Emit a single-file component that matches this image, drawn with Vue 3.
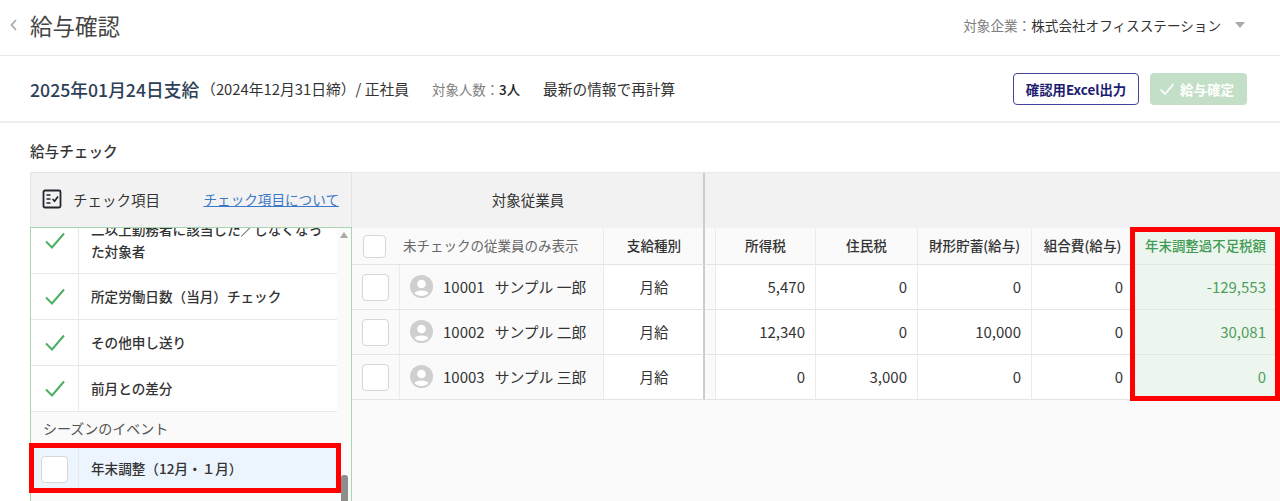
<script setup>
const checks = [
  { label: '二以上勤務者に該当した／しなくなった対象者', cls: 'first' },
  { label: '所定労働日数（当月）チェック' },
  { label: 'その他申し送り' },
  { label: '前月との差分' },
]
const columns = ['所得税', '住民税', '財形貯蓄(給与)', '組合費(給与)']
const employees = [
  { id: '10001', name: 'サンプル 一郎', type: '月給', vals: ['5,470', '0', '0', '0'], diff: '-129,553' },
  { id: '10002', name: 'サンプル 二郎', type: '月給', vals: ['12,340', '0', '10,000', '0'], diff: '30,081' },
  { id: '10003', name: 'サンプル 三郎', type: '月給', vals: ['0', '3,000', '0', '0'], diff: '0' },
]
</script>

<template>
  <div class="page">
    <header class="top">
      <div class="top-left">
        <svg class="back" width="9" height="14" viewBox="0 0 9 14"><path d="M7 2 L2.5 7 L7 12" fill="none" stroke="#aaa" stroke-width="1.8" /></svg>
        <h1>給与確認</h1>
      </div>
      <div class="company">
        <span class="muted">対象企業：</span><span>株式会社オフィスステーション</span>
        <span class="tri"></span>
      </div>
    </header>

    <section class="sub">
      <div class="sub-left">
        <strong class="pay">2025年01月24日支給</strong>
        <span class="close">（2024年12月31日締）/ 正社員</span>
        <span class="count"><span class="muted">対象人数：</span><b>3人</b></span>
        <span class="recalc">最新の情報で再計算</span>
      </div>
      <div class="actions">
        <button class="btn-outline">確認用Excel出力</button>
        <button class="btn-done">
          <svg width="16" height="14" viewBox="0 0 16 14"><path d="M1.5 7.5 L6 12 L14.5 2" fill="none" stroke="#fff" stroke-width="1.6" /></svg>
          給与確定
        </button>
      </div>
    </section>

    <main class="content">
      <h2>給与チェック</h2>
      <div class="board">
        <aside class="panel">
          <div class="panel-head">
            <svg width="20" height="20" viewBox="0 0 20 20">
              <rect x="1.5" y="1.5" width="17" height="17" rx="1.5" fill="none" stroke="#23262e" stroke-width="1.8" />
              <path d="M4.5 6h4M4.5 10h4M4.5 14h4" stroke="#23262e" stroke-width="1.5" />
              <path d="M10.5 10 L12.6 12.2 L16 7.5" fill="none" stroke="#23262e" stroke-width="1.7" />
            </svg>
            <span class="panel-title">チェック項目</span>
            <a class="panel-link">チェック項目について</a>
          </div>
          <div class="list">
            <div class="list-items">
              <div v-for="c in checks" :key="c.label" class="item" :class="c.cls">
                <div class="item-mark">
                  <svg width="22" height="18" viewBox="0 0 22 18"><path d="M2 9.5 L8 15.5 L20 1.5" fill="none" stroke="#4caf64" stroke-width="2" /></svg>
                </div>
                <div class="item-label">{{ c.label }}</div>
              </div>
              <div class="season">シーズンのイベント</div>
              <div class="item active">
                <div class="item-mark"><span class="box"></span></div>
                <div class="item-label">年末調整（12月・１月）</div>
              </div>
            </div>
            <div class="scrollbar">
              <span class="arrow"></span>
              <span class="thumb"></span>
            </div>
          </div>
          <div class="mark-red list-red"></div>
        </aside>

        <div class="right">
          <div class="right-head">
            <div class="emp-head">対象従業員</div>
          </div>
          <div class="table">
            <div class="cell sticky chk hd noline"><span class="box small"></span></div>
            <div class="cell sticky emp hd only">未チェックの従業員のみ表示</div>
            <div class="cell sticky type hd strong">支給種別</div>
            <div class="cell spacer hd"></div>
            <div v-for="c in columns" :key="c" class="cell hd strong center">{{ c }}</div>
            <div class="cell hd strong center green">年末調整過不足税額</div>

            <template v-for="e in employees" :key="e.id">
              <div class="cell sticky chk"><span class="box"></span></div>
              <div class="cell sticky emp">
                <svg class="avatar" width="23" height="23" viewBox="0 0 23 23">
                  <circle cx="11.5" cy="11.5" r="11.5" fill="#cfcfcf" />
                  <circle cx="11.5" cy="9" r="4.3" fill="#fff" />
                  <path d="M4.5 18 C6 14.5 17 14.5 18.5 18 C16.5 20.2 14 21 11.5 21 C9 21 6.5 20.2 4.5 18Z" fill="#fff" />
                </svg>
                <span class="emp-id">{{ e.id }}</span>
                <span class="emp-name">{{ e.name }}</span>
              </div>
              <div class="cell type body center">{{ e.type }}</div>
              <div class="cell spacer body"></div>
              <div v-for="(v, i) in e.vals" :key="i" class="cell num body">{{ v }}</div>
              <div class="cell num green-body">{{ e.diff }}</div>
            </template>
            <div class="mark-red table-red"></div>
          </div>
        </div>
      </div>
    </main>
  </div>
</template>

<style>
html, body { margin: 0; background: #fff; }
</style>

<style scoped>
.page {
  width: 1280px;
  height: 501px;
  overflow: hidden;
  background: #fff;
  color: #333;
  font-family: "Noto Sans CJK JP", "Noto Sans", sans-serif;
  font-size: 14px;
}
.top {
  box-sizing: border-box;
  height: 56px;
  border-bottom: 1px solid #e8e8e8;
  display: flex;
  align-items: center;
  justify-content: space-between;
  padding: 0 35px 6px 9px;
}
.top-left { display: flex; align-items: center; gap: 12px; }
h1 { margin: 0; font-size: 22.5px; font-weight: 400; color: #444; line-height: 30px; }
.company { display: flex; align-items: center; font-size: 13.6px; color: #333; }
.muted { color: #808080; }
.tri {
  margin-left: 14px;
  width: 0; height: 0;
  border-left: 5.5px solid transparent;
  border-right: 5.5px solid transparent;
  border-top: 6px solid #aaa;
}
.sub {
  box-sizing: border-box;
  height: 67px;
  border-bottom: 2px solid #eee;
  display: flex;
  align-items: center;
  justify-content: space-between;
  padding: 0 33px 0 30px;
}
.sub-left { display: flex; align-items: center; }
.pay { font-size: 17.7px; font-weight: 500; color: #2d3f56; }
.close { font-size: 14.8px; color: #333; margin-left: 2px; }
.count { font-size: 13.4px; margin-left: 23px; }
.count b { font-weight: 500; color: #222; }
.recalc { font-size: 14.7px; margin-left: 23px; color: #333; }
.actions { display: flex; gap: 11px; }
button { font-family: inherit; cursor: pointer; padding: 0; }
.btn-outline {
  box-sizing: border-box;
  width: 126px; height: 32px;
  border: 1.5px solid #44449a;
  border-radius: 4px;
  background: #fff;
  color: #1c1c70;
  font-size: 13.4px;
  font-weight: 700;
}
.btn-done {
  box-sizing: border-box;
  width: 97px; height: 32px;
  border: 0;
  border-radius: 4px;
  background: #c3dfc8;
  color: #fff;
  font-size: 13.5px;
  font-weight: 700;
  display: flex;
  align-items: center;
  justify-content: center;
  gap: 5px;
  padding-right: 4px;
}
.content { background: #fff; padding-left: 30px; height: 378px; }
h2 { margin: 0; padding-top: 17px; height: 32px; font-size: 14.6px; line-height: 22px; font-weight: 500; color: #333; }
.board { display: flex; height: 329px; }
.panel { position: relative; width: 322px; flex: none; }
.panel-head {
  box-sizing: border-box;
  height: 55px;
  background: #f2f2f2;
  border: 1px solid #e4e4e4;
  border-bottom: 0;
  display: flex;
  align-items: center;
  padding: 0 12px 2px 11px;
}
.panel-title { margin-left: 11px; font-size: 14.5px; color: #333; }
.panel-link { margin-left: auto; font-size: 13.6px; color: #3d78c8; text-decoration: underline; }
.list {
  display: flex;
  height: 274px;
  overflow: hidden;
  border: 2px solid #a6d5ae;
  border-width: 1px 1px 0;
  box-sizing: border-box;
}
.list-items { flex: 1; min-width: 0; background: #fafafa; margin-top: -20px; }
.item {
  display: flex;
  height: 46px;
  box-sizing: border-box;
  border-bottom: 1px solid #e8e8e8;
  background: #fff;
}
.item.first { height: 66px; }
.item-mark {
  flex: none;
  width: 48px;
  box-sizing: border-box;
  border-right: 1px solid #e8e8e8;
  display: flex;
  align-items: center;
  justify-content: center;
}
.item-label {
  box-sizing: border-box;
  flex: 1;
  display: flex;
  align-items: center;
  padding: 0 12px 2px;
  font-size: 13.6px;
  font-weight: 500;
  line-height: 22px;
  color: #333;
}
.season { height: 34px; line-height: 33px; padding-left: 12px; font-size: 14px; color: #555; background: #fafafa; }
.item.active { background: #ecf4fd; border-bottom: 0; }
.scrollbar { position: relative; flex: none; width: 14px; background: #fafafa; }
.arrow {
  position: absolute; left: 2.5px; top: 4px;
  width: 0; height: 0;
  border-left: 4.5px solid transparent;
  border-right: 4.5px solid transparent;
  border-bottom: 6px solid #aaa;
}
.thumb {
  position: absolute; left: 4px; top: 247px;
  width: 7px; height: 40px;
  border-radius: 3px;
  background: #8e8e8e;
}
.box {
  display: block;
  box-sizing: border-box;
  width: 27px; height: 27px;
  background: #fff;
  border: 1.5px solid #d6d6d6;
  border-radius: 4px;
}
.box.small { width: 23px; height: 23px; margin-left: -4px; }
.mark-red { position: absolute; border: 5px solid #f00; box-sizing: border-box; pointer-events: none; }
.list-red { left: -1px; top: 271px; width: 312px; height: 50px; }

.right { flex: 1; min-width: 0; background: #fafafa; }
.right-head { height: 56px; background: #f2f2f2; border-top: 1px solid #e8e8e8; box-sizing: border-box; display: flex; }
.emp-head {
  box-sizing: border-box;
  width: 353px;
  border-right: 2px solid #ccc;
  display: flex;
  align-items: center;
  justify-content: center;
  padding: 0 0 2px 1px;
  font-size: 14.5px;
  color: #333;
}
.table {
  position: relative;
  display: grid;
  grid-template-columns: 48px 204px 101px 11px 100px 102px 114px 102px 146px;
  grid-template-rows: 37px 45px 45px 45px;
}
.cell {
  box-sizing: border-box;
  border-right: 1px solid #ebebeb;
  border-bottom: 1px solid #e4e4e4;
  display: flex;
  align-items: center;
  padding-bottom: 2px;
  font-size: 14.5px;
  color: #333;
}
.hd { background: #fafafa; font-size: 13.6px; }
.noline { border-right: 0; }
.strong { font-weight: 500; }
.center { justify-content: center; }
.sticky { background: #fafafa; }
.chk { justify-content: center; padding-bottom: 0; }
.emp { padding-left: 10px; gap: 10px; }
.emp-id { font-size: 15px; }
.emp-name { font-size: 14.8px; }
.only { padding-left: 3px; color: #666; font-size: 13.5px; }
.type { justify-content: center; border-right: 2px solid #ccc; background: #fafafa; padding-left: 1px; }
.type.body { background: #fff; }
.spacer.hd, .spacer.body { background: #fafafa; }
.body { background: #fff; }
.num { justify-content: flex-end; padding-right: 10px; font-size: 15px; }
.green { color: #3f9a52; background: #edf6ee; justify-content: flex-end; padding-right: 14px; border-right: 0; font-size: 13.45px; }
.green-body { background: #edf6ee; color: #4f9e5e; padding-right: 14px; border-right: 0; }
.table-red { left: 778px; top: -1px; width: 150px; height: 174px; }
</style>
